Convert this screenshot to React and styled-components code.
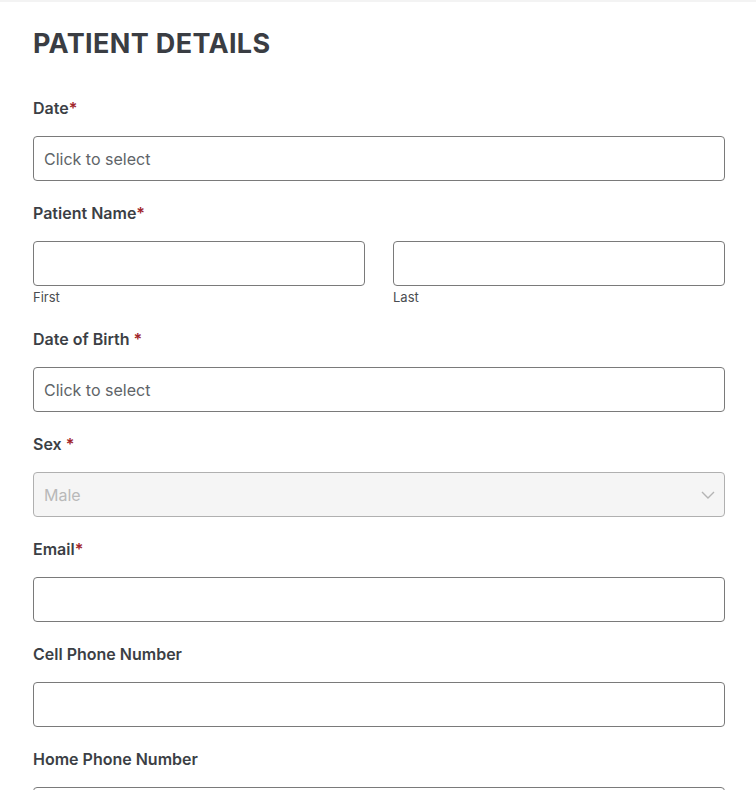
import styled, { createGlobalStyle } from "styled-components";

const Global = createGlobalStyle`
  body {
    margin: 0;
    background: #ffffff;
    font-family: Inter, "Noto Sans", sans-serif;
  }
`;

export default function App() {
  return (
    <Page>
      <Global />
      <Titulo>PATIENT DETAILS</Titulo>
      <Campo>
        <Rotulo>
          Date<Asterisco>*</Asterisco>
        </Rotulo>
        <Entrada placeholder="Click to select" />
      </Campo>
      <Campo>
        <Rotulo>
          Patient Name<Asterisco>*</Asterisco>
        </Rotulo>
        <Dupla>
          <div>
            <Entrada />
            <SubRotulo>First</SubRotulo>
          </div>
          <div>
            <Entrada />
            <SubRotulo>Last</SubRotulo>
          </div>
        </Dupla>
      </Campo>
      <Campo>
        <Rotulo>
          Date of Birth <Asterisco>*</Asterisco>
        </Rotulo>
        <Entrada placeholder="Click to select" />
      </Campo>
      <Campo>
        <Rotulo>
          Sex <Asterisco>*</Asterisco>
        </Rotulo>
        <Selecao>
          <span>Male</span>
          <svg width="14" height="8" viewBox="0 0 14 8">
            <path d="M1 1l6 6 6-6" fill="none" stroke="#b4b4b4" strokeWidth="1.4" />
          </svg>
        </Selecao>
      </Campo>
      <Campo>
        <Rotulo>
          Email<Asterisco>*</Asterisco>
        </Rotulo>
        <Entrada />
      </Campo>
      <Campo>
        <Rotulo>Cell Phone Number</Rotulo>
        <Entrada />
      </Campo>
      <Campo>
        <Rotulo>Home Phone Number</Rotulo>
        <Entrada />
      </Campo>
    </Page>
  );
}

const Page = styled.div`
  border-top: 2px solid #f3f3f3;
  padding: 26px 31px 40px 33px;
  height: 790px;
  overflow: hidden;
  box-sizing: border-box;
`;

const Titulo = styled.h1`
  margin: 0 0 38px 0;
  font-size: 27px;
  line-height: 32px;
  font-weight: 700;
  color: #3a3d43;
  letter-spacing: 0.35px;
`;

const Campo = styled.div`
  margin-bottom: 22px;
`;

const Rotulo = styled.div`
  font-size: 16px;
  line-height: 20px;
  font-weight: 600;
  color: #3c3f45;
  margin-bottom: 18px;
`;

const Asterisco = styled.span`
  color: #a1262b;
`;

const Entrada = styled.input`
  display: block;
  width: 100%;
  height: 45px;
  box-sizing: border-box;
  border: 1px solid #7a7a7a;
  border-radius: 4px;
  padding: 0 10px;
  font-family: Inter, "Noto Sans", sans-serif;
  font-size: 16px;
  color: #333;
  background: #ffffff;
  outline: none;
  &::placeholder {
    color: #606468;
  }
`;

const Dupla = styled.div`
  display: grid;
  grid-template-columns: 1fr 1fr;
  gap: 28px;
`;

const SubRotulo = styled.div`
  font-size: 13px;
  line-height: 19px;
  color: #4a4d52;
  margin-top: 2px;
`;

const Selecao = styled.div`
  display: flex;
  align-items: center;
  justify-content: space-between;
  height: 45px;
  box-sizing: border-box;
  border: 1px solid #b0b0b0;
  border-radius: 4px;
  padding: 0 9px 0 10px;
  background: #f5f5f5;
  span {
    font-size: 16px;
    color: #b9b9b9;
  }
`;
